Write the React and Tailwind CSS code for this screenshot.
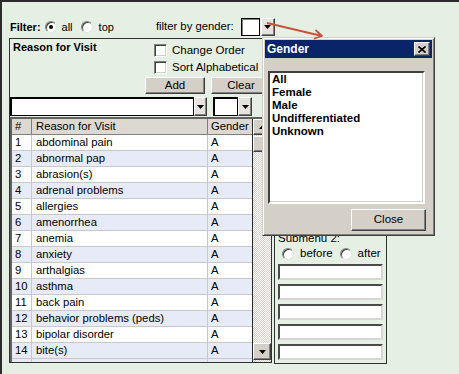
import React from "react";

function Tri({ up = false }) {
  return (
    <svg width="7" height="4" viewBox="0 0 7 4">
      {up ? <path d="M0 4h7L3.5 0z" fill="#000" /> : <path d="M0 0h7L3.5 4z" fill="#000" />}
    </svg>
  );
}

function Radio({ checked = false, className = "" }) {
  return (
    <span
      className={
        "inline-flex items-center justify-center w-[12px] h-[12px] shrink-0 rounded-full bg-white border border-t-[#808080] border-l-[#808080] border-r-[#e4e4e4] border-b-[#e4e4e4] shadow-[inset_1px_1px_0_#404040] " +
        className
      }
    >
      {checked && <span className="w-[4px] h-[4px] rounded-full bg-black" />}
    </span>
  );
}

function Check() {
  return (
    <span className="w-[13px] h-[13px] shrink-0 bg-white border border-t-[#808080] border-l-[#808080] border-r-white border-b-white shadow-[inset_1px_1px_0_#404040,inset_-1px_-1px_0_#d4d0c8]" />
  );
}

function DropBtn({ className = "" }) {
  return (
    <div
      className={
        "flex items-center justify-center shrink-0 bg-[#e6e3de] border border-t-white border-l-white border-r-[#404040] border-b-[#404040] shadow-[inset_-1px_-1px_0_#808080] " +
        className
      }
    >
      <Tri />
    </div>
  );
}

function Btn({ children, className = "" }) {
  return (
    <div
      className={
        "flex items-center justify-center shrink-0 bg-[#d4d0c8] border border-t-white border-l-white border-r-[#404040] border-b-[#404040] shadow-[inset_-1px_-1px_0_#808080] " +
        className
      }
    >
      {children}
    </div>
  );
}

const rows = [
  "abdominal pain",
  "abnormal pap",
  "abrasion(s)",
  "adrenal problems",
  "allergies",
  "amenorrhea",
  "anemia",
  "anxiety",
  "arthalgias",
  "asthma",
  "back pain",
  "behavior problems (peds)",
  "bipolar disorder",
  "bite(s)",
];

export default function App() {
  return (
    <div className="relative w-[459px] h-[374px] overflow-hidden bg-[#e5efe4] border-t-2 border-l-2 border-[#2c2c2c] font-['Liberation_Sans',Arial,sans-serif] text-[11px] leading-none text-black">
      {/* filter row */}
      <div className="flex items-center h-[18px] mt-[16px] pl-[8px]">
        <span className="font-bold">Filter:</span>
        <Radio checked className="ml-[4px]" />
        <span className="ml-[5px]">all</span>
        <Radio className="ml-[8px]" />
        <span className="ml-[6px]">top</span>
        <span className="ml-[42px] text-[11.3px]">filter by gender:</span>
        <div className="ml-[7px] w-[19px] h-[18px] bg-white border border-black shadow-[inset_1px_1px_0_#808080]" />
        <DropBtn className="ml-px w-[14px] h-[18px]" />
      </div>

      {/* panels */}
      <div className="flex mt-[2px] pl-[7px]">
        {/* main panel */}
        <div className="flex flex-col w-[263px] h-[325px] border border-[#303030]">
          <div className="flex h-[58px]">
            <div className="w-[135px] pl-[3px] pt-[3px] font-bold">Reason for Visit</div>
            <div className="flex flex-col pt-[5px]">
              <div className="flex items-center h-[13px] pl-[9px]">
                <Check />
                <span className="ml-[5px] text-[11.5px]">Change Order</span>
              </div>
              <div className="flex items-center h-[13px] pl-[9px] mt-[4px]">
                <Check />
                <span className="ml-[5px] text-[11.5px] whitespace-nowrap">Sort Alphabetical</span>
              </div>
              <div className="flex mt-[3px] gap-[6px]">
                <Btn className="w-[60px] h-[17px] text-[11.5px]">Add</Btn>
                <Btn className="w-[60px] h-[17px] text-[11.5px]">Clear</Btn>
              </div>
            </div>
          </div>

          <div className="flex h-[19px]">
            <div className="w-[184px] h-full bg-white border border-black border-t-2 border-l-2" />
            <DropBtn className="w-[13px] h-full" />
            <div className="ml-[6px] w-[25px] h-full bg-white border border-black border-t-2 border-l-2" />
            <DropBtn className="w-[14px] h-full" />
          </div>

          {/* table */}
          <div className="flex mt-px h-[245px] border-t-2 border-l-2 border-t-[#606060] border-l-[#606060] overflow-hidden">
            <div className="flex flex-col w-[241px] border-r border-[#2a2a2a] bg-white text-[11.3px]">
              <div className="flex h-[16px] shrink-0 bg-[#dcd9d3] border-b border-[#808080]">
                <div className="w-[20px] pl-[3px] flex items-center border-r border-[#808080]">#</div>
                <div className="w-[176px] pl-[4px] flex items-center border-r border-[#808080]">Reason for Visit</div>
                <div className="flex-1 pl-[3px] flex items-center">Gender</div>
              </div>
              {rows.map((r, i) => (
                <div
                  key={r}
                  className={
                    "flex h-[16px] shrink-0 border-b border-[#c8c8c8] " +
                    (i % 2 === 1 ? "bg-[#e7ebf7]" : "bg-white")
                  }
                >
                  <div className="w-[20px] pl-[3px] flex items-center border-r border-[#c8c8c8]">{i + 1}</div>
                  <div className="w-[176px] pl-[4px] flex items-center border-r border-[#c8c8c8]">{r}</div>
                  <div className="flex-1 pl-[3px] flex items-center">A</div>
                </div>
              ))}
              <div className="flex h-[16px] shrink-0 bg-[#e7ebf7]">
                <div className="w-[20px] border-r border-[#c8c8c8]" />
                <div className="w-[176px] border-r border-[#c8c8c8]" />
              </div>
            </div>
            {/* scrollbar */}
            <div className="flex flex-col flex-1 bg-[repeating-conic-gradient(#d4d0c8_0_25%,#ffffff_0_50%)] bg-[length:2px_2px]">
              <Btn className="h-[16px] w-full">
                <Tri up />
              </Btn>
              <Btn className="h-[16px] w-full mt-px" />
              <div className="flex-1" />
              <Btn className="h-[17px] w-full">
                <Tri />
              </Btn>
              <div className="h-[2px]" />
            </div>
          </div>
        </div>

        {/* right panel */}
        <div className="ml-[2px] flex flex-col justify-end w-[113px] h-[326px] border border-[#303030] px-[3px] pb-[3px]">
          <div className="text-[11.5px] leading-[11px] mb-[4px]">Submenu 2:</div>
          <div className="flex items-center h-[12px] mb-[4px] pl-[4px]">
            <Radio />
            <span className="ml-[6px] text-[11.5px]">before</span>
            <Radio className="ml-[7px]" />
            <span className="ml-[6px] text-[11.5px]">after</span>
          </div>
          <div className="flex flex-col gap-[4px]">
            {[0, 1, 2, 3, 4].map((k) => (
              <div
                key={k}
                className="h-[16px] w-full bg-white border-2 border-[#d8d6d2] border-t-[#4a4a4a] border-l-[#4a4a4a]"
              />
            ))}
          </div>
        </div>
      </div>

      {/* Gender dialog */}
      <div className="absolute left-[260px] top-[35px] w-[173px] h-[199px] flex flex-col bg-[#d4d0c8] border border-t-[#d4d0c8] border-l-[#d4d0c8] border-r-[#404040] border-b-[#404040] shadow-[inset_1px_1px_0_#ffffff,inset_-1px_-1px_0_#808080] px-[2px] pt-[2px]">
        <div className="flex items-center justify-between h-[18px] bg-[#0a246a] text-white font-bold text-[12px] pl-[2px] pr-[2px]">
          <span>Gender</span>
          <Btn className="w-[16px] h-[14px]">
            <svg width="8" height="7" viewBox="0 0 8 7">
              <path d="M0.5 0.5L7.5 6.5M7.5 0.5L0.5 6.5" stroke="#000" strokeWidth="1.6" />
            </svg>
          </Btn>
        </div>
        <div className="ml-[3px] mt-[13px] w-[157px] h-[133px] bg-white border-2 border-t-[#404040] border-l-[#404040] border-r-[#ffffff] border-b-[#ffffff] shadow-[inset_-1px_-1px_0_#d4d0c8] pl-[2px] font-bold text-[11.5px] leading-[13px]">
          <div>All</div>
          <div>Female</div>
          <div>Male</div>
          <div>Undifferentiated</div>
          <div>Unknown</div>
        </div>
        <div className="flex justify-end mt-[5px] pr-[6px]">
          <Btn className="w-[75px] h-[22px] text-[11.5px]">Close</Btn>
        </div>
      </div>

      {/* arrow */}
      <svg className="absolute -left-[2px] -top-[2px] pointer-events-none" width="459" height="60" viewBox="0 0 459 60">
        <path d="M267 23L322 36" stroke="#c4553c" strokeWidth="1.8" fill="none" />
        <path d="M316 30.5L322 36L314.5 38.5" stroke="#c4553c" strokeWidth="1.8" fill="none" strokeLinecap="round" strokeLinejoin="round" />
      </svg>
    </div>
  );
}
